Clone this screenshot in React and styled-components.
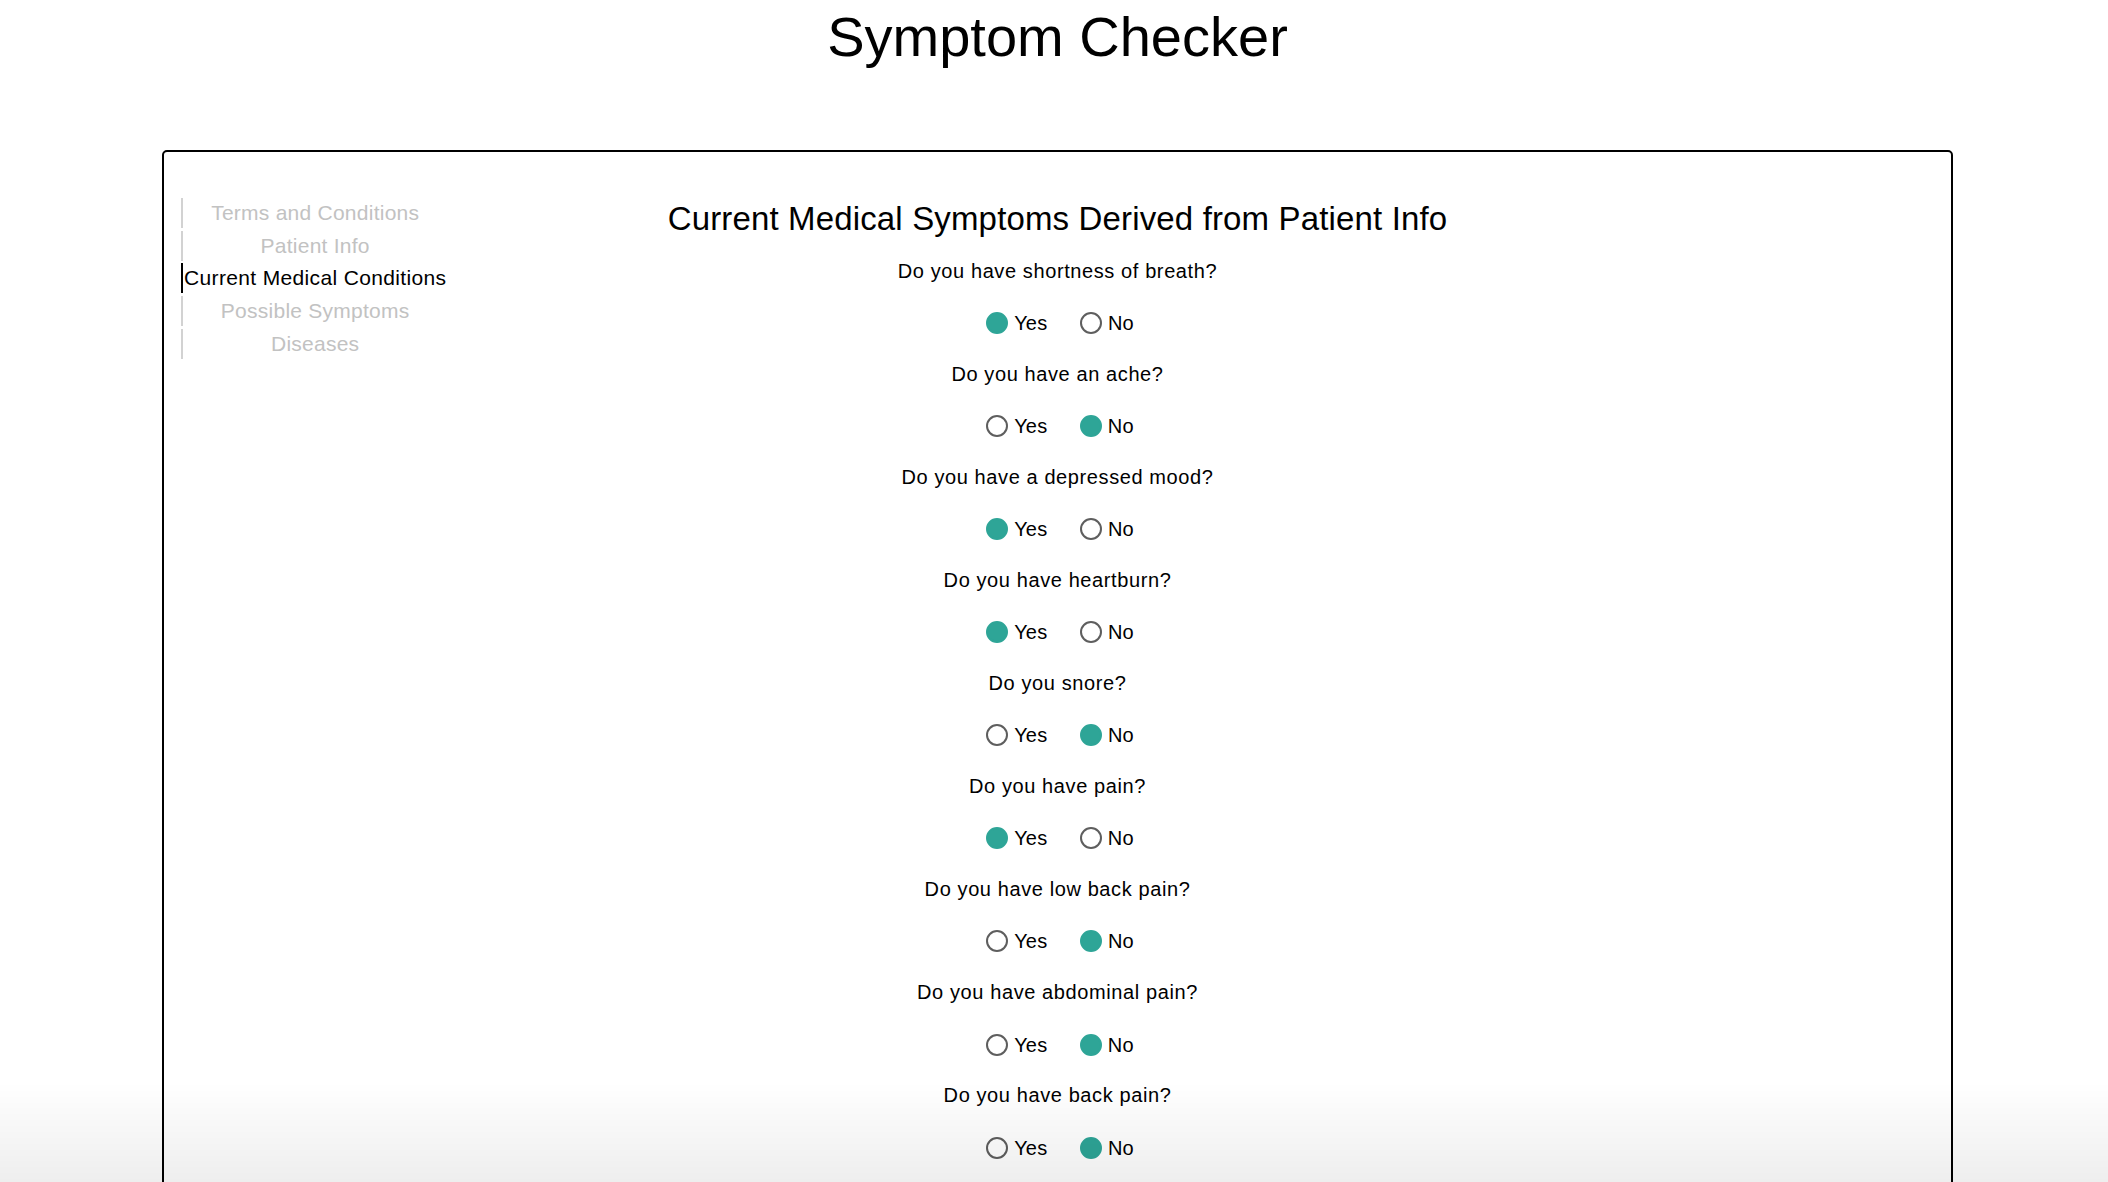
import React, { useState } from "react";
import styled, { createGlobalStyle } from "styled-components";

const GlobalStyle = createGlobalStyle`
  html, body {
    margin: 0;
    padding: 0;
    background: #ffffff;
    overflow: hidden;
  }
  body {
    font-family: "Liberation Sans", Arial, Helvetica, sans-serif;
    color: #000;
  }
`;

const Page = styled.div`
  padding: 0 155px 0 162px;
`;

const Title = styled.h1`
  margin: 5px 0 0;
  font-size: 56px;
  line-height: 64px;
  font-weight: 400;
  text-align: center;
`;

const Card = styled.section`
  margin-top: 81px;
  border: 2px solid #000;
  border-radius: 5px;
  display: grid;
  grid-template-columns: 1fr auto 1fr;
  padding-bottom: 60px;
`;

const Sidebar = styled.nav`
  grid-column: 1;
  justify-self: start;
  align-self: start;
  padding: 46px 0 0 17px;
  display: flex;
  flex-direction: column;
  gap: 2.7px;
`;

const NavItem = styled.div`
  height: 30px;
  line-height: 30px;
  font-size: 21px;
  text-align: center;
  white-space: nowrap;
  padding-left: 1px;
  border-left: 2px solid ${(p) => (p.$active ? "#000" : "#d2d2d2")};
  color: ${(p) => (p.$active ? "#000" : "#c2c2c2")};
  letter-spacing: ${(p) => (p.$active ? "0.35px" : "0.25px")};
`;

const Content = styled.div`
  grid-column: 2;
  padding-top: 48px;
  display: flex;
  flex-direction: column;
  align-items: center;
`;

const Heading = styled.h2`
  margin: 0 0 20.6px;
  font-size: 33px;
  line-height: 38px;
  font-weight: 400;
  letter-spacing: 0.15px;
  text-align: center;
`;

const QuestionList = styled.div`
  display: flex;
  flex-direction: column;
  align-items: center;
  gap: 26.7px;
`;

const QuestionBlock = styled.div`
  display: flex;
  flex-direction: column;
  align-items: center;
  gap: 28.4px;
`;

const QuestionText = styled.p`
  margin: 0;
  font-size: 20px;
  line-height: 24px;
  letter-spacing: 0.6px;
  text-align: center;
`;

const RadioRow = styled.div`
  display: flex;
  align-items: center;
  gap: 32.5px;
  height: 24px;
  padding-left: 5px;
`;

const RadioLabel = styled.label`
  display: flex;
  align-items: center;
  gap: 6px;
  font-size: 20px;
  line-height: 24px;
  letter-spacing: 0.2px;
  cursor: pointer;
`;

const RadioInput = styled.input`
  appearance: none;
  -webkit-appearance: none;
  margin: 0;
  width: 22px;
  height: 22px;
  border-radius: 50%;
  box-sizing: border-box;
  border: 2px solid #5e5e5e;
  background: #fff;
  cursor: pointer;
  &:checked {
    border-color: #2ea597;
    background: #2ea597;
  }
`;

const BottomFade = styled.div`
  position: fixed;
  left: 0;
  right: 0;
  bottom: 0;
  height: 100px;
  pointer-events: none;
  background: linear-gradient(to bottom, rgba(0, 0, 0, 0), rgba(0, 0, 0, 0.065));
`;

const navItems = [
  "Terms and Conditions",
  "Patient Info",
  "Current Medical Conditions",
  "Possible Symptoms",
  "Diseases",
];

const initialQuestions = [
  { id: "breath", text: "Do you have shortness of breath?", answer: "yes" },
  { id: "ache", text: "Do you have an ache?", answer: "no" },
  { id: "mood", text: "Do you have a depressed mood?", answer: "yes" },
  { id: "heartburn", text: "Do you have heartburn?", answer: "yes" },
  { id: "snore", text: "Do you snore?", answer: "no" },
  { id: "pain", text: "Do you have pain?", answer: "yes" },
  { id: "lowback", text: "Do you have low back pain?", answer: "no" },
  { id: "abdominal", text: "Do you have abdominal pain?", answer: "no" },
  { id: "back", text: "Do you have back pain?", answer: "no" },
];

export default function App() {
  const [questions, setQuestions] = useState(initialQuestions);

  const setAnswer = (id, answer) =>
    setQuestions((qs) => qs.map((q) => (q.id === id ? { ...q, answer } : q)));

  return (
    <>
      <GlobalStyle />
      <Page>
        <Title>Symptom Checker</Title>
        <Card>
          <Sidebar>
            {navItems.map((item) => (
              <NavItem key={item} $active={item === "Current Medical Conditions"}>
                {item}
              </NavItem>
            ))}
          </Sidebar>
          <Content>
            <Heading>Current Medical Symptoms Derived from Patient Info</Heading>
            <QuestionList>
              {questions.map((q) => (
                <QuestionBlock key={q.id}>
                  <QuestionText>{q.text}</QuestionText>
                  <RadioRow>
                    <RadioLabel>
                      <RadioInput
                        type="radio"
                        name={q.id}
                        checked={q.answer === "yes"}
                        onChange={() => setAnswer(q.id, "yes")}
                      />
                      Yes
                    </RadioLabel>
                    <RadioLabel>
                      <RadioInput
                        type="radio"
                        name={q.id}
                        checked={q.answer === "no"}
                        onChange={() => setAnswer(q.id, "no")}
                      />
                      No
                    </RadioLabel>
                  </RadioRow>
                </QuestionBlock>
              ))}
            </QuestionList>
          </Content>
        </Card>
      </Page>
      <BottomFade />
    </>
  );
}
